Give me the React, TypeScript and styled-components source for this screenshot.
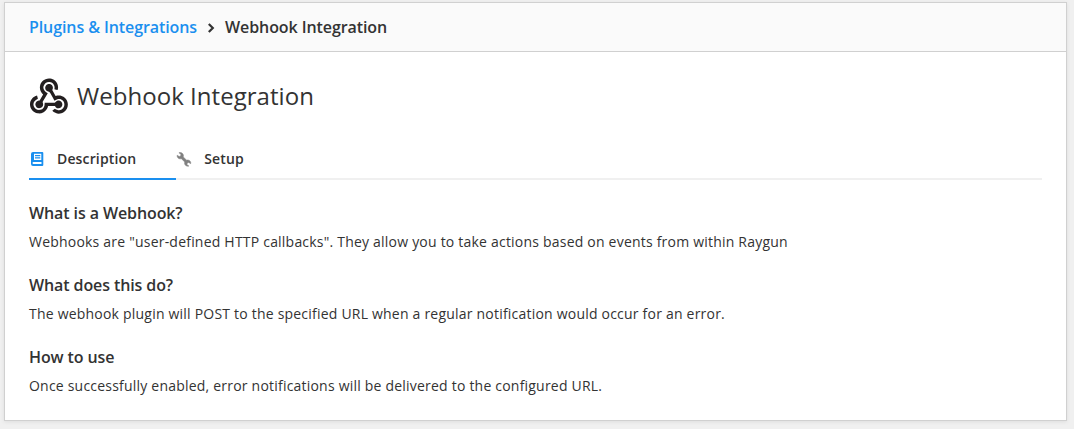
import React from "react";
import styled, { createGlobalStyle } from "styled-components";

const GlobalStyle = createGlobalStyle`
  * { box-sizing: border-box; }
  body {
    margin: 0;
    background: #f0f0f0;
    color: #333;
    font: 14px/20px "Open Sans", sans-serif;
  }
`;

const Page = styled.div`
  padding: 2px 7px 8px 4px;
  height: 429px;
`;

const Card = styled.main`
  height: 419px;
  background: #fff;
  border: 1px solid #d0d0d0;
  box-shadow: 0 1px 4px rgba(0, 0, 0, 0.08);
`;

const Breadcrumbs = styled.nav`
  display: flex;
  align-items: center;
  height: 49px;
  padding: 0 24px;
  background: #fafafa;
  border-bottom: 1px solid #d0d0d0;
  font-size: 16px;
  font-weight: 600;
  line-height: 24px;
  letter-spacing: -0.09px;
`;

const CrumbLink = styled.a`
  color: #1a8fef;
  text-decoration: none;
`;

const Chevron = styled.svg`
  width: 8px;
  height: 10px;
  margin: 1px 10px 0;
`;

const Body = styled.div`
  padding: 24px;
`;

const TitleRow = styled.header`
  display: flex;
  align-items: center;
  height: 40px;
  gap: 9px;
  padding-left: 1px;
`;

const Title = styled.h1`
  margin: 0;
  font-size: 24px;
  font-weight: 400;
  line-height: 36px;
  letter-spacing: 0.04px;
`;

const Logo = styled.svg`
  width: 38px;
  height: 36px;
`;

const Tabs = styled.div`
  display: flex;
  height: 42px;
  margin-top: 22px;
  box-shadow: inset 0 -2px #f0f0f0;
`;

const Tab = styled.div<{ $active?: boolean }>`
  display: flex;
  align-items: center;
  gap: 12px;
  padding: 2px 40px 0 0;
  border-bottom: 2px solid ${(p) => (p.$active ? "#1a8fef" : "transparent")};
  font-weight: 600;
  letter-spacing: 0.14px;
`;

const TabIcon = styled.svg`
  width: 16px;
  height: 16px;
`;

const Section = styled.section`
  margin-top: 20px;
`;

const Heading = styled.h2`
  margin: 0 0 6px;
  font-size: 16px;
  font-weight: 600;
  line-height: 26px;
  letter-spacing: -0.1px;
`;

const Text = styled.p`
  margin: 0;
  letter-spacing: 0.21px;
`;

const sections = [
  {
    title: "What is a Webhook?",
    text: 'Webhooks are "user-defined HTTP callbacks". They allow you to take actions based on events from within Raygun',
  },
  {
    title: "What does this do?",
    text: "The webhook plugin will POST to the specified URL when a regular notification would occur for an error.",
  },
  {
    title: "How to use",
    text: "Once successfully enabled, error notifications will be delivered to the configured URL.",
  },
];

const WebhookLogo = () => (
  <Logo viewBox="0 0 256 239" fill="#231f20">
    <path d="M119.54 100.503c-10.61 17.836-20.775 35.108-31.152 52.25-2.665 4.401-3.984 7.986-1.855 13.58 5.878 15.454-2.414 30.493-17.998 34.575-14.697 3.851-29.016-5.808-31.932-21.543-2.584-13.927 8.224-27.58 23.58-29.757 1.286-.184 2.6-.205 4.762-.367l23.358-39.168C73.612 95.465 64.868 78.39 66.803 57.23c1.368-14.957 7.25-27.883 18-38.477 20.59-20.288 52.002-23.573 76.246-8.001 23.284 14.958 33.948 44.094 24.858 69.031-6.854-1.858-13.756-3.732-21.343-5.79 2.854-13.865.743-26.315-8.608-36.981-6.178-7.042-14.106-10.733-23.12-12.093-18.072-2.73-35.815 8.88-41.08 26.618-5.976 20.13 3.069 36.575 27.784 48.967z" />
    <path d="M149.841 79.41c7.475 13.187 15.065 26.573 22.587 39.836 38.02-11.763 66.686 9.284 76.97 31.817 12.422 27.219 3.93 59.457-20.465 76.25-25.04 17.238-56.707 14.293-78.892-7.851 5.654-4.733 11.336-9.487 17.407-14.566 21.912 14.192 41.077 13.524 55.305-3.282 12.133-14.337 11.87-35.714-.615-49.75-14.408-16.197-33.707-16.691-57.035-1.143-9.677-17.168-19.522-34.199-28.893-51.491-3.16-5.828-6.648-9.21-13.77-10.443-11.893-2.062-19.571-12.275-20.032-23.717-.453-11.316 6.214-21.545 16.634-25.53 10.322-3.949 22.435-.762 29.378 8.014 5.674 7.17 7.477 15.24 4.491 24.083-.83 2.466-1.905 4.852-3.07 7.774z" />
    <path d="M167.707 187.21h-45.77c-4.387 18.044-13.863 32.612-30.19 41.876-12.693 7.2-26.373 9.641-40.933 7.29-26.808-4.323-48.728-28.456-50.658-55.63-2.184-30.784 18.975-58.147 47.178-64.293 1.947 7.071 3.915 14.21 5.862 21.264-25.876 13.202-34.832 29.836-27.59 50.636 6.375 18.304 24.484 28.337 44.147 24.457 20.08-3.962 30.204-20.65 28.968-47.432 19.036 0 38.088-.197 57.126.097 7.434.117 13.173-.654 18.773-7.208 9.22-10.784 26.191-9.811 36.121.374 10.148 10.409 9.662 27.157-1.077 37.127-10.361 9.62-26.73 9.106-36.424-1.26-1.992-2.136-3.562-4.673-5.533-7.298z" />
  </Logo>
);

export default function App() {
  return (
    <Page>
      <GlobalStyle />
      <Card>
        <Breadcrumbs>
          <CrumbLink>Plugins &amp; Integrations</CrumbLink>
          <Chevron viewBox="0 0 8 10" fill="none" stroke="#333" strokeWidth="2.2">
            <path d="M1.8 1l4 4-4 4" />
          </Chevron>
          <span>Webhook Integration</span>
        </Breadcrumbs>
        <Body>
          <TitleRow>
            <WebhookLogo />
            <Title>Webhook Integration</Title>
          </TitleRow>
          <Tabs>
            <Tab $active>
              <TabIcon viewBox="0 0 16 16" fill="#1a8fef">
                <path
                  fillRule="evenodd"
                  d="M4 1H13.300a1 1 0 0 1 1 1V14a1 1 0 0 1-1 1H4a2 2 0 0 1-2-2V3a2 2 0 0 1 2-2zM5 2.700V9H12.300V2.700zM4.500 11a1 1 0 0 0 0 2H12.500V11z"
                />
                <path d="M6 4h5.300v1.300H6zM6 6.300h5.300v1.300H6z" />
              </TabIcon>
              Description
            </Tab>
            <Tab>
              <TabIcon viewBox="0 0 16 16" fill="#808080" stroke="#808080" strokeWidth="0.5">
                <path d="M1.2 4.2l2 1.3 1.5-.6.2-1.7-2-1.4c1.7-.6 3.5.1 4.2 1.500.5.9.5 1.700.2 2.600l3.300 3.300c1.300-.4 2.600-.1 3.400.8.7.8.9 1.800.7 2.700l-2-1.300-1.500.6-.2 1.700 1.900 1.300c-1.500.5-3.200 0-4-1.400-.5-.9-.5-1.800-.2-2.600L5.400 7.700c-1.200.4-2.500.1-3.400-.8-.8-.8-1-1.800-.8-2.700z" />
              </TabIcon>
              Setup
            </Tab>
          </Tabs>
          {sections.map((s) => (
            <Section key={s.title}>
              <Heading>{s.title}</Heading>
              <Text>{s.text}</Text>
            </Section>
          ))}
        </Body>
      </Card>
    </Page>
  );
}
